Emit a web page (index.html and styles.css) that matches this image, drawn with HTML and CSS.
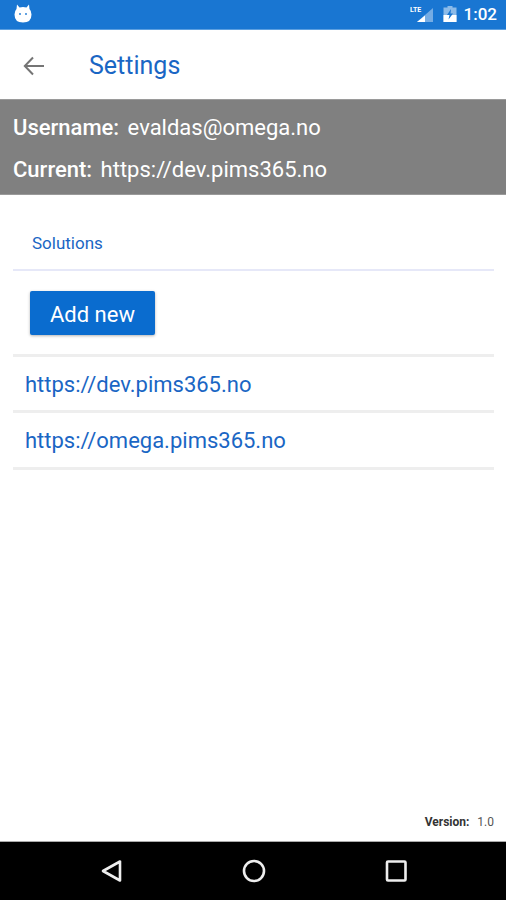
FILE: index.html
```html
<!DOCTYPE html>
<html lang="en">

<head>
    <meta charset="UTF-8">
    <meta name="viewport" content="width=device-width, initial-scale=1.0">
    <title>Settings</title>
    <link rel="stylesheet" href="styles.css">
</head>

<body>

    <div class="status-bar">
        <svg class="status-app" width="18" height="19" viewBox="0 0 18 19">
            <path d="M3 0.5 L5.5 3.5 Q9 2.6 12.500 3.500 L15 0.5 L15.500 5 Q17.500 7 17.500 10.500 Q17.500 18.500 9 18.500 Q0.500 18.500 0.500 10.500 Q0.500 7 2.500 5 Z" fill="#fff" />
            <circle cx="6" cy="10" r="0.9" fill="#1976d2" />
            <circle cx="12" cy="10" r="0.9" fill="#1976d2" />
        </svg>
        <div class="status-right">
            <svg class="status-signal" width="24" height="18" viewBox="0 0 24 18">
                <path d="M23 3 V17 H7 Z" fill="#fff" fill-opacity="0.4" />
                <path d="M15 10.500 V17 H7 Z" fill="#fff" />
                <text x="0" y="6.500" class="lte">LTE</text>
            </svg>
            <svg class="status-battery" width="14" height="16" viewBox="0 0 14 16">
                <path d="M4.500 0 H9.500 V1.500 H13.500 V16 H0.500 V1.500 H4.500 Z" fill="#fff" fill-opacity="0.5" />
                <path d="M0.500 9 H13.500 V16 H0.500 Z" fill="#fff" />
                <path d="M8 3 L4 9 H6.500 L5.500 13.500 L10 7.500 H7.500 Z" fill="#1976d2" />
            </svg>
            <span class="status-time">1:02</span>
        </div>
    </div>

    <header>
        <svg class="back-icon" width="24" height="24" viewBox="0 0 24 24">
            <path d="M22 12 H3 M11 3.500 L2.800 12 L11 20.500" fill="none" stroke="#757575" stroke-width="2" />
        </svg>
        <h1>Settings</h1>
    </header>

    <section class="account">
        <p><strong>Username:</strong> <span>evaldas@omega.no</span></p>
        <p><strong>Current:</strong> <span>https://dev.pims365.no</span></p>
    </section>

    <main class="content">
        <h2>Solutions</h2>
        <div class="add-row">
            <button class="btn-add">Add new</button>
        </div>
        <ul class="solutions">
            <li><a href="#">https://dev.pims365.no</a></li>
            <li><a href="#">https://omega.pims365.no</a></li>
        </ul>
        <p class="version"><strong>Version:</strong> <span>1.0</span></p>
    </main>

    <nav class="nav-bar">
        <svg width="24" height="24" viewBox="0 0 24 24">
            <path d="M20 2.500 V21.500 L3 12 Z" fill="none" stroke="#eee" stroke-width="2.600" stroke-linejoin="round" />
        </svg>
        <svg width="24" height="24" viewBox="0 0 24 24">
            <circle cx="12" cy="12" r="10" fill="none" stroke="#eee" stroke-width="2.600" />
        </svg>
        <svg width="24" height="24" viewBox="0 0 24 24">
            <rect x="3" y="2.500" width="18.500" height="19" rx="1" fill="none" stroke="#eee" stroke-width="2.600" />
        </svg>
    </nav>

</body>

</html>
```

FILE: styles.css
```css
* {
    margin: 0;
    padding: 0;
    box-sizing: border-box;
    font-family: 'Roboto', sans-serif;
}

body {
    background: white;
    min-height: 900px;
    display: flex;
    flex-direction: column;
}

.status-bar {
    height: 30px;
    padding: 0 9px 2px 14px;
    background: #1976d2;
    border-bottom: 1px solid #5c9fe0;
    display: flex;
    justify-content: space-between;
    align-items: center;
}

.status-right {
    display: flex;
    align-items: center;
}

.lte {
    font-size: 7px;
    font-weight: 700;
    fill: white;
}

.status-battery {
    margin-left: 9px;
}

.status-time {
    margin-left: 7px;
    color: white;
    font-size: 17px;
    font-weight: 500;
}

header {
    height: 69px;
    padding: 2px 0 0 22px;
    display: flex;
    align-items: center;
    gap: 43px;
}

header h1 {
    color: #1a66c4;
    font-size: 25px;
    font-weight: 400;
}

.account {
    height: 96px;
    padding: 14px 13px 0;
    background: #808080;
    border-top: 1px solid #9a9a9a;
    border-bottom: 1px solid #9a9a9a;
    color: white;
    font-size: 22px;
}

.account p {
    height: 42px;
    line-height: 28px;
}

.account strong {
    font-weight: 500;
    margin-right: 3px;
}

.content {
    flex: 1;
    padding: 0 12px 0 13px;
    display: flex;
    flex-direction: column;
}

.content h2 {
    height: 76px;
    padding: 38px 0 0 19px;
    border-bottom: 2px solid #e6e8f8;
    color: #1a66c4;
    font-size: 17px;
    font-weight: 400;
}

.add-row {
    height: 86px;
    padding: 20px 0 0 17px;
    border-bottom: 3px solid #eee;
}

.btn-add {
    width: 125px;
    height: 44px;
    padding-top: 2px;
    background: #0a6ccf;
    color: white;
    border: none;
    border-radius: 2px;
    box-shadow: 0 1px 3px rgba(0, 0, 0, 0.3);
    font-size: 22px;
}

.solutions {
    list-style: none;
}

.solutions li {
    height: 56px;
    padding: 14px 0 0 12px;
    border-bottom: 3px solid #eee;
}

.solutions li:last-child {
    height: 57px;
}

.solutions a {
    color: #1a66c4;
    font-size: 22px;
    line-height: 28px;
    text-decoration: none;
}

.version {
    margin-top: auto;
    padding-bottom: 12px;
    text-align: right;
    color: #555;
    font-size: 12px;
}

.version strong {
    margin-right: 5px;
    color: #333;
}

.nav-bar {
    height: 59px;
    padding: 0 98px 0 100px;
    background: black;
    border-top: 1px solid #aaa;
    display: flex;
    justify-content: space-between;
    align-items: center;
}
```
